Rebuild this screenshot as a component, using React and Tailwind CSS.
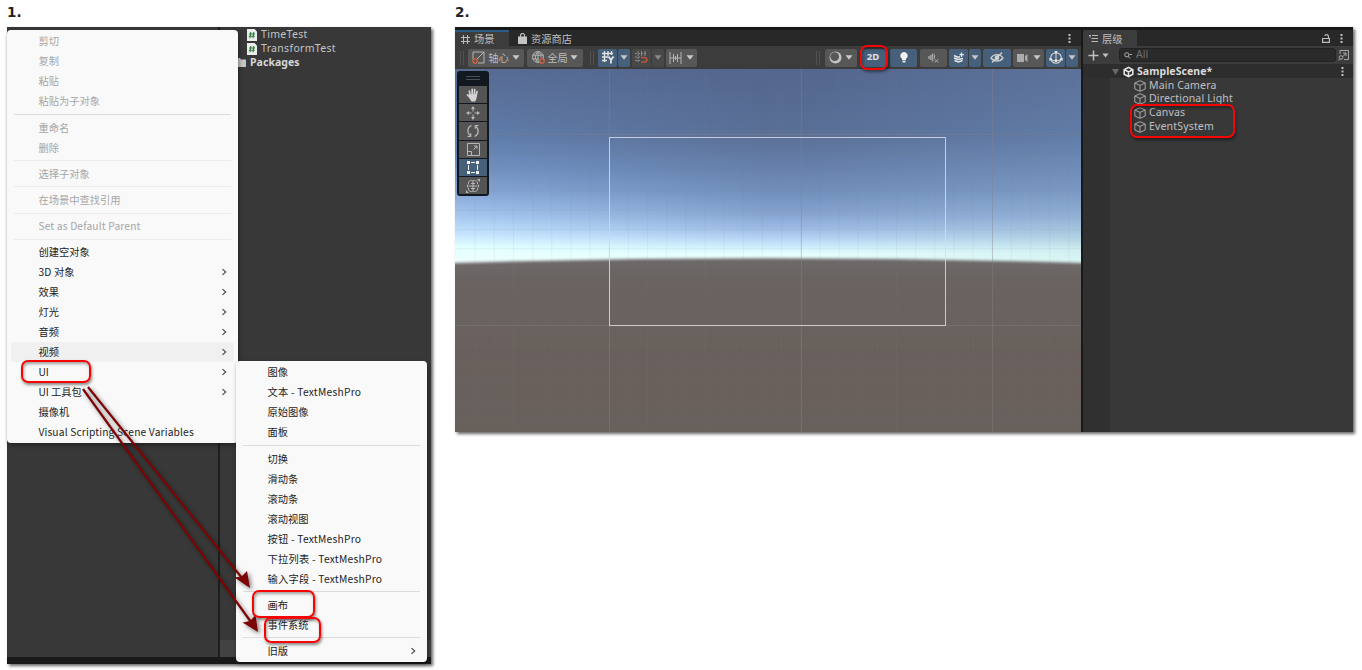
import clsx from "clsx";

const CONTEXT_MENU = [
  { label: "剪切", disabled: true },
  { label: "复制", disabled: true },
  { label: "粘贴", disabled: true },
  { label: "粘贴为子对象", disabled: true },
  { divider: true, strong: true },
  { label: "重命名", disabled: true },
  { label: "删除", disabled: true },
  { divider: true },
  { label: "选择子对象", disabled: true },
  { divider: true },
  { label: "在场景中查找引用", disabled: true },
  { divider: true },
  { label: "Set as Default Parent", disabled: true, latin: true },
  { divider: true },
  { label: "创建空对象" },
  { label: "3D 对象", arrow: true, latin: true },
  { label: "效果", arrow: true },
  { label: "灯光", arrow: true },
  { label: "音频", arrow: true },
  { label: "视频", arrow: true, hovered: true },
  { label: "UI", arrow: true },
  { label: "UI 工具包", arrow: true },
  { label: "摄像机" },
  { label: "Visual Scripting Scene Variables", latin: true },
];

const UI_MENU = [
  { label: "图像" },
  { label: "文本 - TextMeshPro", wide: true },
  { label: "原始图像" },
  { label: "面板" },
  { divider: true, strong: true },
  { label: "切换" },
  { label: "滑动条" },
  { label: "滚动条" },
  { label: "滚动视图" },
  { label: "按钮 - TextMeshPro", wide: true },
  { label: "下拉列表 - TextMeshPro", wide: true },
  { label: "输入字段 - TextMeshPro", wide: true },
  { divider: true, strong: true },
  { label: "画布" },
  { label: "事件系统" },
  { divider: true, strong: true },
  { label: "旧版", arrow: true },
];

function Menu({ items, className }) {
  return (
    <div
      className={clsx(
        "absolute rounded-[4px] bg-[#f9f9f9] shadow-[1px_2px_4px_rgba(0,0,0,0.4)] pt-[1.4px] font-['Noto_Sans_CJK_SC',sans-serif] text-[10.25px] leading-[20px]",
        className
      )}
    >
      {items.map((item, i) =>
        item.divider ? (
          <div key={i} className="h-[6.2px] px-[7px] pt-[2.6px]">
            <div className={clsx("h-px", item.strong ? "bg-[#dcdcdc]" : "bg-[#ebebeb]")} />
          </div>
        ) : (
          <div
            key={i}
            className={clsx(
              "mx-[4px] flex h-[20px] items-center justify-between rounded-[3px] pl-[27.4px] pr-[7px] whitespace-nowrap",
              item.hovered && "bg-[#f0f0f0]",
              item.disabled ? "text-[#a6a6a6]" : "text-[#1c1c1c]",
              item.latin && "tracking-[0.15px]",
              item.wide && "tracking-[0.25px]"
            )}
          >
            <span>{item.label}</span>
            {item.arrow && (
              <svg width="6" height="8" viewBox="0 0 6 8" fill="none" stroke="#444" strokeWidth="1.1">
                <path d="M1.5 1.2 4.7 4 1.5 6.8" />
              </svg>
            )}
          </div>
        )
      )}
    </div>
  );
}

function RedBox({ className }) {
  return (
    <div
      className={clsx(
        "absolute border-[2.5px] border-[#f60505] shadow-[1px_2px_3px_rgba(0,0,0,0.45),inset_1px_2px_3px_rgba(0,0,0,0.35)]",
        className
      )}
    />
  );
}

function ScriptIcon() {
  return (
    <svg width="10" height="12" viewBox="0 0 10 12">
      <path d="M0 0h7.5L10 2.5V12H0Z" fill="#ececec" />
      <path d="M3.8 3 3 9.2M6.8 3 6 9.2M2 5h6M1.8 7.3h6" stroke="#2c7a3c" strokeWidth="1.1" />
    </svg>
  );
}

function ProjectPanel() {
  return (
    <div className="relative h-[637px] w-[424px] bg-[#383838] shadow-[2px_2px_3px_rgba(0,0,0,0.6)]">
      <div className="flex h-[630px]">
        <div className="w-[213px] border-r-2 border-[#1e1e1e]" />
        <div className="flex flex-1 flex-col justify-between">
          <div className="pt-[1.5px] font-['Noto_Sans',sans-serif] text-[10.5px] tracking-[0.32px] text-[#c4c4c4]">
            <div className="flex h-[13.7px] items-center gap-[4px] pl-[27px]">
              <ScriptIcon />
              <span>TimeTest</span>
            </div>
            <div className="flex h-[13.7px] items-center gap-[4px] pl-[27px]">
              <ScriptIcon />
              <span>TransformTest</span>
            </div>
            <div className="flex h-[13.7px] items-center gap-[4px] pl-[16px] font-bold tracking-[0.05px] text-[#d6d6d6]">
              <svg width="10" height="9" viewBox="0 0 10 9">
                <path d="M0 0h4l1 1.5h5V9H0Z" fill="#c4c4c4" />
              </svg>
              <span>Packages</span>
            </div>
          </div>
          <div className="h-[17px] bg-[#424242]" />
        </div>
      </div>
      <div className="h-[7px] bg-[#191919]" />

      <Menu items={CONTEXT_MENU} className="left-0 top-[3px] h-[413px] w-[231px]" />
      <Menu items={UI_MENU} className="left-[229px] top-[334px] h-[301px] w-[191px]" />
    </div>
  );
}

// Arrows from the UI entry to 画布 and 事件系统
function Arrows() {
  return (
    <svg className="absolute left-0 top-0 drop-shadow-[2px_2px_2px_rgba(0,0,0,0.5)]" width="440" height="670">
      <g stroke="#7c0404" strokeWidth="2.2">
        <path d="M88 387 242 578" />
        <path d="M83 389 251 622" />
      </g>
      <g fill="#7c0404">
        <path d="M250 588 234.500 577.500 241.500 576.500 247 571Z" />
        <path d="M258 632 242.500 622.500 250 621 255.500 615Z" />
      </g>
    </svg>
  );
}

function Caret({ dim }) {
  return (
    <svg width="8" height="5" viewBox="0 0 8 5">
      <path d="M0.5 0.3h7L4 4.7Z" fill={dim ? "#8a8a8a" : "#c8c8c8"} />
    </svg>
  );
}

function ToolButton({ className, blue, dim, children }) {
  return (
    <div
      className={clsx(
        "flex h-[18px] shrink-0 items-center justify-center rounded-[2px]",
        blue ? "bg-[#46607c]" : dim ? "bg-[#484848]" : "bg-[#575757]",
        className
      )}
    >
      {children}
    </div>
  );
}

function Grip({ className }) {
  return <div className={clsx("h-[14px] w-[4px] shrink-0 border-x border-[#525252]", className)} />;
}

function Dots() {
  return (
    <svg width="3" height="9" viewBox="0 0 3 9" fill="#c0c0c0">
      <rect x="0.5" width="2" height="2" />
      <rect x="0.5" y="3.5" width="2" height="2" />
      <rect x="0.5" y="7" width="2" height="2" />
    </svg>
  );
}

function SceneToolbar() {
  return (
    <div className="flex h-[23px] items-center bg-[#3c3c3c] pl-[5px] font-['Noto_Sans_CJK_SC',sans-serif] text-[10.25px] text-[#bcbcbc]">
      <Grip />
      <ToolButton className="ml-[4px] w-[56px] gap-[3px]">
        <svg width="13" height="13" viewBox="0 0 13 13" fill="none" stroke="#b4b4b4">
          <path d="M1 8V1h11v11H6M4.5 8.5 12 1" />
          <circle cx="3" cy="10" r="2.2" stroke="#d9603b" strokeWidth="1.3" />
        </svg>
        <span>轴心</span>
        <Caret />
      </ToolButton>
      <ToolButton className="ml-[3px] w-[56px] gap-[2px]">
        <svg width="13" height="13" viewBox="0 0 13 13" fill="none" stroke="#b4b4b4">
          <circle cx="6" cy="6" r="5.4" />
          <path d="M6 .6v11M.6 4.2h11M.6 8h6M6 .6C2.6 3.5 2.6 8.5 6 11.4M6 .6c2.6 2 3 4 3 6" />
          <circle cx="10" cy="10" r="2.2" fill="#575757" stroke="#d9603b" strokeWidth="1.3" />
        </svg>
        <span>全局</span>
        <Caret />
      </ToolButton>
      <Grip className="ml-[7px]" />
      <ToolButton blue className="ml-[4px] w-[19px]">
        <svg width="14" height="13" viewBox="0 0 14 13" fill="none" stroke="#e4e4e4" strokeWidth="1.3">
          <path d="M3.5 0v11M7 0v5M10.5 0v4M1 2.5h11M1 6h6M1 9.5h5" />
          <path d="M7.5 5.5 10 9l2.5-3.5M10 9v3.5" strokeWidth="1.8" />
        </svg>
      </ToolButton>
      <ToolButton blue className="ml-px w-[12px]"><Caret /></ToolButton>
      <ToolButton dim className="ml-[2px] w-[19px]">
        <svg width="13" height="13" viewBox="0 0 13 13" fill="none" stroke="#8c8c8c" strokeDasharray="2 1">
          <path d="M3 0v12M6.5 0v5M10 0v5M0 2.5h12M0 6h6M0 9.5h5" />
          <path d="M6 6.5h3.5a2 2 0 0 1 0 4.5H6" stroke="#b8543a" strokeWidth="1.7" strokeDasharray="none" />
        </svg>
      </ToolButton>
      <ToolButton dim className="ml-px w-[12px]"><Caret dim /></ToolButton>
      <ToolButton className="ml-[2px] w-[31px] gap-[4px]">
        <svg width="13" height="12" viewBox="0 0 13 12" fill="none" stroke="#b4b4b4">
          <path d="M1 0v12M12 0v12M4.5 2v8M8.5 2v8M1 6h11M6.5 4v4" />
        </svg>
        <Caret />
      </ToolButton>

      <Grip className="ml-[119px]" />
      <ToolButton className="ml-[5px] w-[32px] gap-[3px]">
        <svg width="13" height="13" viewBox="0 0 13 13">
          <circle cx="6.5" cy="6.5" r="6" fill="#c4c4c4" />
          <circle cx="5.7" cy="5.6" r="4.4" fill="#575757" />
        </svg>
        <Caret />
      </ToolButton>
      <ToolButton blue className="ml-[3px] w-[26px] font-['Noto_Sans',sans-serif] text-[9.5px] font-bold text-[#e0e0e0]">
        2D
      </ToolButton>
      <ToolButton blue className="ml-[4px] w-[27px]">
        <svg width="8" height="11" viewBox="0 0 8 11" fill="#f0f0f0">
          <path d="M4 0a3.7 3.7 0 0 1 2 6.8V8H2V6.8A3.7 3.7 0 0 1 4 0Z" />
          <rect x="2.5" y="8.6" width="3" height="1.8" />
        </svg>
      </ToolButton>
      <ToolButton className="ml-[3px] w-[27px]">
        <svg width="11" height="10" viewBox="0 0 11 10" fill="none" stroke="#a8a8a8">
          <path d="M1 3v3M2.8 2v5M4.6 .5v8" strokeWidth="1.4" />
          <path d="M6.5 1.5v4M6.5 6l4 3.5M10.5 6l-4 3.5" />
        </svg>
      </ToolButton>
      <ToolButton blue className="ml-[2px] w-[19px]">
        <svg width="12" height="12" viewBox="0 0 12 12" fill="none" stroke="#e8e8e8" strokeWidth="1.5">
          <path d="M1 3.5 4 5h3M1 6l4 1.500 5-1M1.500 8.500 5.500 10l4-1.500" />
          <path d="M8.5 0.500v4.500M6.5 2.7h4.500" strokeWidth="1.3" />
        </svg>
      </ToolButton>
      <ToolButton blue className="ml-px w-[12px]"><Caret /></ToolButton>
      <ToolButton blue className="ml-[2px] w-[28px]">
        <svg width="14" height="11" viewBox="0 0 14 11" fill="none" stroke="#d0d0d0" strokeWidth="1.3">
          <path d="M1 6c3-4.5 9-4.5 12 0-3 4-9 4-12 0ZM2 10.5 12 .5" />
          <circle cx="7" cy="5.7" r="1.7" fill="#d0d0d0" />
        </svg>
      </ToolButton>
      <ToolButton className="ml-[2px] w-[31px] gap-[4px]">
        <svg width="12" height="8" viewBox="0 0 12 8" fill="#acacac">
          <path d="M0 0h7v8H0ZM8 2 10.500 0v8L8 6Z" />
        </svg>
        <Caret />
      </ToolButton>
      <ToolButton blue className="ml-[2px] w-[19px]">
        <svg width="14" height="14" viewBox="0 0 14 14" fill="none" stroke="#d4d4d4" strokeWidth="1.1">
          <circle cx="7" cy="7" r="5.3" />
          <path d="M7 1v9M1.500 8.500Q7 11 12.500 8.500" />
          <path d="M5.700 0h2.600v2.600H5.700ZM0.300 7h2.400v2.400H.300ZM11.300 7h2.400v2.400h-2.400ZM5.800 8.500h2.400v2.400H5.800Z" fill="#e4e4e4" stroke="none" />
        </svg>
      </ToolButton>
      <ToolButton blue className="ml-px w-[12px]"><Caret /></ToolButton>
    </div>
  );
}

// positions of the minor grid lines, ten to a major cell
const GRID_X = Array.from({ length: 32 }, (_, i) => 20.2 + i * 19.15);
const GRID_Y = Array.from({ length: 19 }, (_, i) => 7.3 + i * 19.15);

function SceneView() {
  return (
    <svg className="block" width="626" height="363" viewBox="0 0 626 363">
      <defs>
        <linearGradient id="sky" x1="0" y1="0" x2="0" y2="195" gradientUnits="userSpaceOnUse">
          <stop offset="0" stopColor="#53668d" />
          <stop offset="0.34" stopColor="#5b7097" />
          <stop offset="0.5" stopColor="#6580ab" />
          <stop offset="0.64" stopColor="#7391bd" />
          <stop offset="0.74" stopColor="#86a3d0" />
          <stop offset="0.81" stopColor="#9ab8e2" />
          <stop offset="0.87" stopColor="#b6d4f5" />
          <stop offset="0.92" stopColor="#d2f3fe" />
          <stop offset="0.95" stopColor="#e8ffff" />
          <stop offset="1" stopColor="#e8fcfb" />
        </linearGradient>
        <linearGradient id="skyLeft" x1="0" y1="0" x2="0" y2="195" gradientUnits="userSpaceOnUse">
          <stop offset="0" stopColor="#576b94" />
          <stop offset="0.34" stopColor="#5f7dab" />
          <stop offset="0.5" stopColor="#7090c1" />
          <stop offset="0.62" stopColor="#84a4d4" />
          <stop offset="0.76" stopColor="#a8caf1" />
          <stop offset="0.85" stopColor="#c6e6ff" />
          <stop offset="0.91" stopColor="#e0ffff" />
          <stop offset="1" stopColor="#f2ffff" />
        </linearGradient>
        <linearGradient id="skyRight" x1="0" y1="0" x2="0" y2="195" gradientUnits="userSpaceOnUse">
          <stop offset="0" stopColor="#5d7299" />
          <stop offset="0.34" stopColor="#607ca7" />
          <stop offset="0.62" stopColor="#7a98c2" />
          <stop offset="0.76" stopColor="#93b1d5" />
          <stop offset="0.86" stopColor="#b0cfe2" />
          <stop offset="0.93" stopColor="#d0eef0" />
          <stop offset="1" stopColor="#dcf7f5" />
        </linearGradient>
        <linearGradient id="fadeLeft">
          <stop offset="0" stopColor="#fff" />
          <stop offset="0.5" stopColor="#000" />
        </linearGradient>
        <linearGradient id="fadeRight">
          <stop offset="0.55" stopColor="#000" />
          <stop offset="1" stopColor="#fff" />
        </linearGradient>
        <mask id="maskLeft"><rect width="626" height="363" fill="url(#fadeLeft)" /></mask>
        <mask id="maskRight"><rect width="626" height="363" fill="url(#fadeRight)" /></mask>
        <linearGradient id="ground" x1="0" y1="190" x2="0" y2="363" gradientUnits="userSpaceOnUse">
          <stop offset="0" stopColor="#6d6868" />
          <stop offset="0.2" stopColor="#69625f" />
          <stop offset="1" stopColor="#68605a" />
        </linearGradient>
        <filter id="soft" x="-5%" y="-5%" width="110%" height="110%">
          <feGaussianBlur stdDeviation="0 1.8" />
        </filter>
      </defs>
      <rect width="626" height="230" fill="url(#sky)" />
      <rect width="626" height="230" fill="url(#skyLeft)" mask="url(#maskLeft)" />
      <rect width="626" height="230" fill="url(#skyRight)" mask="url(#maskRight)" />
      <path d="M-20 194.500Q313 184 646 194.500V380H-20Z" fill="url(#ground)" filter="url(#soft)" />

      <g stroke="#80858a" strokeOpacity="0.09">
        {GRID_X.map((x) => (
          <path key={x} d={`M${x} 0V363`} />
        ))}
        {GRID_Y.map((y) => (
          <path key={y} d={`M0 ${y}H626`} />
        ))}
      </g>
      <g stroke="#858585" strokeOpacity="0.35">
        <path d="M154.5 0V363M346.5 0V363M537.5 0V363" />
        <path d="M0 65.5H626M0 256.5H626" />
      </g>
      <rect x="154.5" y="68.5" width="336" height="188" fill="none" stroke="#dcdcdf" strokeOpacity="0.85" />
    </svg>
  );
}

const TOOLS = [
  <svg key="hand" width="14" height="14" viewBox="0 0 14 14" fill="none" stroke="#d4d4d4" strokeWidth="1.7" strokeLinecap="round">
    <path d="M4.2 8 3.4 3M6.2 7V1.3M8.3 7l.4-5.5M10 8l1-4.5M4.5 10 1.5 6.8" />
    <path d="M4.2 7h6l-.8 4.5-1 1.2H6L4.3 10Z" fill="#d4d4d4" />
  </svg>,
  <svg key="move" width="14" height="14" viewBox="0 0 14 14" fill="#b8b8b8">
    <path d="M7 0 9 3H5ZM7 14 5 11h4ZM0 7l3-2v4ZM14 7l-3 2V5ZM6.5 3h1v2.5h-1ZM6.5 8.5h1V11h-1ZM3 6.5h2.5v1H3ZM8.5 6.5H11v1H8.5Z" />
  </svg>,
  <svg key="rotate" width="14" height="14" viewBox="0 0 14 14" fill="none" stroke="#b8b8b8" strokeWidth="1.2">
    <path d="M5.5 1.5C1.5 3 .5 8.5 4 11.5M1.5 12.5h3.2V9.3M8.5 12.5c4-1.5 5-7 1.5-10M12.500 1.5H9.300v3.200" />
  </svg>,
  <svg key="scale" width="13" height="13" viewBox="0 0 13 13" fill="none" stroke="#b8b8b8">
    <path d="M.5 .5h12v12H.5ZM.5 8.5h4v4M6.5 6.5 10 3M7 3h3v3" />
  </svg>,
  <svg key="rect" width="14" height="13" viewBox="0 0 14 13" fill="#f2f2f2">
    <path d="M1 0h3v3H1ZM10 0h3v3h-3ZM1 10h3v3H1ZM10 10h3v3h-3ZM5 1h4v1H5ZM5 11h4v1H5ZM2 4h1v5H2ZM11 4h1v5h-1Z" />
  </svg>,
  <svg key="transform" width="14" height="14" viewBox="0 0 14 14" fill="none" stroke="#b8b8b8">
    <path d="M7 2C5 .5 2 2 2.500 5 .800 6 .800 8 2.500 9 2 12 5 13.500 7 12M7 2c2-1.500 5 0 4.500 3 1.700 1 1.700 3 0 4 .5 3-2.500 4.500-4.500 3M7 2v10M2.500 7h9M5 4.500h4M5 9.500h4" />
    <path d="M11 0h3v3ZM0 11v3h3Z" fill="#b8b8b8" stroke="none" />
  </svg>,
];

function ToolPalette() {
  return (
    <div className="absolute left-[2px] top-[41px] flex h-[125px] w-[32px] flex-col items-center gap-px rounded-[3px] bg-[#12181f]">
      <div className="mt-[5px] mb-[5px] h-[4px] w-[14px] border-y border-[#4a4f55]" />
      {TOOLS.map((icon, i) => (
        <div
          key={i}
          className={clsx(
            "flex h-[17.2px] w-[28px] items-center justify-center",
            i === 4 ? "bg-[#46607c]" : "bg-[#545454]"
          )}
        >
          {icon}
        </div>
      ))}
    </div>
  );
}

function ScenePanel() {
  return (
    <div className="flex w-[626px] flex-col">
      <div className="flex h-[16px] bg-[#282828] font-['Noto_Sans_CJK_SC',sans-serif] text-[10.25px] leading-[16px] text-[#c0c0c0]">
        <div className="flex w-[54px] items-center gap-[4px] border-t-2 border-[#2c5d87] bg-[#3c3c3c] pl-[6px]">
          <svg width="9" height="9" viewBox="0 0 9 9" stroke="#bcbcbc">
            <path d="M2.5 0v9M6.5 0v9M0 2.5h9M0 6.5h9" />
          </svg>
          <span>场景</span>
        </div>
        <div className="flex flex-1 items-center gap-[4px] pl-[9px] pt-px">
          <svg width="9" height="11" viewBox="0 0 9 11">
            <path d="M0 3.5h9V11H0Z" fill="#c4c4c4" />
            <path d="M2.5 4V2.5a2 2 0 0 1 4 0V4" fill="none" stroke="#c4c4c4" strokeWidth="1.2" />
          </svg>
          <span>资源商店</span>
        </div>
        <div className="flex items-center pr-[10px]"><Dots /></div>
      </div>
      <SceneToolbar />
      <SceneView />
    </div>
  );
}

function CubeIcon() {
  return (
    <svg width="12" height="12" viewBox="0 0 12 12" fill="none" stroke="#a8a8a8" strokeLinejoin="round">
      <path d="M6 .7 11.2 3v6L6 11.3.8 9V3ZM.8 3 6 5.4 11.2 3M6 5.4v5.9" />
    </svg>
  );
}

function HierarchyPanel() {
  return (
    <div className="flex w-[272px] flex-col border-l-2 border-[#191919]">
      <div className="flex h-[16px] items-stretch bg-[#282828] font-['Noto_Sans_CJK_SC',sans-serif] text-[10.25px] leading-[16px] text-[#c0c0c0]">
        <div className="flex w-[54px] items-center gap-[4px] rounded-t-[2px] bg-[#3c3c3c] pl-[6px] pt-px">
          <svg width="9" height="8" viewBox="0 0 9 8" stroke="#bcbcbc">
            <path d="M0 .5h2M3 .5h6M2.5 3.5H9M2.5 6.5H9M1 .5v2" />
          </svg>
          <span>层级</span>
        </div>
        <div className="flex flex-1 items-center justify-end gap-[10px] pr-[10px]">
          <svg width="8" height="9" viewBox="0 0 8 9" fill="none" stroke="#bcbcbc" strokeWidth="1.2">
            <path d="M.6 4.5h6.8v3.9H.6ZM6.5 4.5V2.5a2 2 0 0 0-3.8-.7" />
          </svg>
          <Dots />
        </div>
      </div>
      <div className="flex h-[18px] items-center bg-[#3c3c3c] pl-[5px] font-['Noto_Sans',sans-serif]">
        <svg width="11" height="11" viewBox="0 0 11 11" stroke="#c0c0c0" strokeWidth="1.5">
          <path d="M5.5 .5v10M.5 5.5h10" />
        </svg>
        <svg className="ml-[3px]" width="7" height="5" viewBox="0 0 8 5">
          <path d="M.5 .3h7L4 4.7Z" fill="#c0c0c0" />
        </svg>
        <div className="ml-[10px] flex h-[14px] w-[217px] items-center gap-[4px] rounded-[3px] border border-[#222] bg-[#2a2a2a] pl-[4px] text-[10.5px] text-[#707070]">
          <svg width="8" height="7" viewBox="0 0 8 7" fill="none" stroke="#b0b0b0">
            <circle cx="2.8" cy="2.8" r="2.1" />
            <path d="M4.3 4.3 6 6.5M5.5 2.5h2.5" />
          </svg>
          <span>All</span>
        </div>
        <svg className="ml-[2px]" width="11" height="11" viewBox="0 0 11 11" fill="none" stroke="#a8a8a8">
          <path d="M2 4V.5h8.5v9H6M5 6.5 8 3M5 3h3v3" />
          <circle cx="3" cy="7.5" r="1.8" />
          <path d="M1.8 8.8 .3 10.5" />
        </svg>
      </div>
      <div className="flex h-[14px] items-center bg-[#2d2d2d] pl-[29px] pr-[9px] pt-px font-['Noto_Sans',sans-serif] text-[10.5px] font-bold tracking-[0.05px] text-[#dadada]">
        <svg width="7" height="6" viewBox="0 0 7 6"><path d="M0 0h7L3.5 6Z" fill="#6a6a6a" /></svg>
        <svg className="ml-[4px] mr-[3px]" width="11" height="12" viewBox="0 0 12 12" fill="none" stroke="#e6e6e6" strokeWidth="1.7">
          <path d="M6 1 10.7 3.5v5L6 11 1.3 8.5v-5ZM2.5 4 6 6l3.5-2M6 6v4" />
        </svg>
        <span className="flex-1">SampleScene*</span>
        <Dots />
      </div>
      <div className="flex flex-1 bg-[#303030]">
        <div className="ml-[27px] flex-1 bg-[#383838] pl-[24px] pt-[0.7px] font-['Noto_Sans',sans-serif] text-[10.5px] tracking-[0.17px] text-[#c0c0c0]">
          {["Main Camera", "Directional Light", "Canvas", "EventSystem"].map((name) => (
            <div key={name} className="flex h-[13.7px] items-center gap-[3px]">
              <CubeIcon />
              <span>{name}</span>
            </div>
          ))}
        </div>
      </div>
    </div>
  );
}

function StepTitle({ children }) {
  return (
    <h2 className="h-[27px] pt-[4px] font-['DejaVu_Sans',sans-serif] text-[13.5px] leading-[17px] font-bold text-[#222]">
      {children}
    </h2>
  );
}

export default function App() {
  return (
    <div className="relative flex h-[670px] w-[1362px] items-start gap-[24px] overflow-hidden bg-white pl-[7px]">
      <section>
        <StepTitle>1.</StepTitle>
        <ProjectPanel />
      </section>
      <section>
        <StepTitle>2.</StepTitle>
        <div className="relative flex h-[405px] w-[898px] border-t-[3px] border-[#191919] shadow-[2px_2px_3px_rgba(0,0,0,0.6)]">
          <ScenePanel />
          <HierarchyPanel />
          <ToolPalette />
        </div>
      </section>

      <Arrows />
      <RedBox className="left-[21px] top-[360px] h-[23px] w-[70px] rounded-[7px]" />
      <RedBox className="left-[252px] top-[590px] h-[28px] w-[63px] rounded-[7px]" />
      <RedBox className="left-[264px] top-[617px] h-[26px] w-[57px] rounded-[7px]" />
      <RedBox className="left-[860px] top-[45px] h-[25px] w-[28px] rounded-[7px]" />
      <RedBox className="left-[1130px] top-[104px] h-[34px] w-[105px] rounded-[7px]" />
    </div>
  );
}
